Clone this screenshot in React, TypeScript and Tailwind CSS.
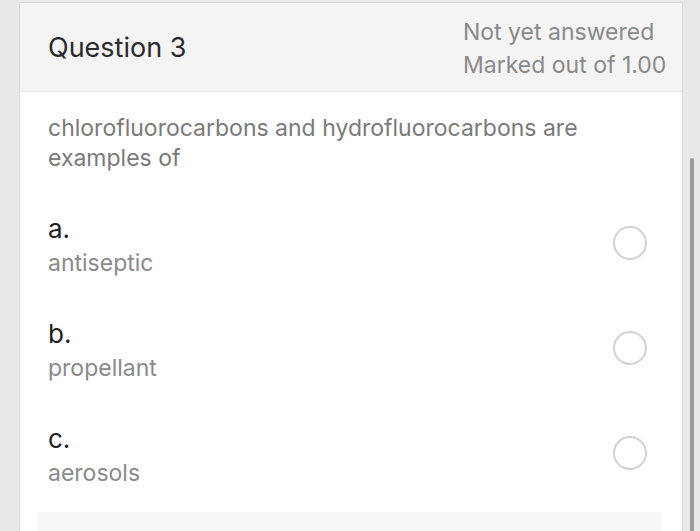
import React from "react";

const options = [
  { letter: "a.", text: "antiseptic" },
  { letter: "b.", text: "propellant" },
  { letter: "c.", text: "aerosols" },
];

function Radio() {
  return <div className="w-[34px] h-[34px] mb-[6px] rounded-full border-2 border-[#d2d2d2] bg-white shrink-0" />;
}

export default function App() {
  return (
    <div
      className="w-[700px] h-[531px] overflow-hidden bg-[#e9e9e9] flex"
      style={{ fontFamily: "Inter, Roboto, 'Liberation Sans', sans-serif" }}
    >
      <div className="ml-[19px] mt-[2px] w-[664px] shrink-0 border-x border-t border-[#d9d9d9] bg-white flex flex-col">
        {/* header */}
        <div className="h-[89px] shrink-0 bg-[#f4f4f4] border-b border-[#ececec] flex items-center pl-[28px]">
          <div className="flex-1 text-[27px] text-[#2a2a2a] pt-[2px]">Question 3</div>
          <div className="w-[219px] text-[23px] leading-[33px] text-[#8a8a8a] pt-[3px]">
            <div>Not yet answered</div>
            <div>Marked out of 1.00</div>
          </div>
        </div>

        {/* body */}
        <div className="pl-[28px] pr-[35px] pt-[21px]">
          <p className="text-[23px] leading-[30px] text-[#7a7a7a] pr-[50px]">
            chlorofluorocarbons and hydrofluorocarbons are examples of
          </p>

          <div className="mt-[39px] flex flex-col gap-[37px]">
            {options.map((o) => (
              <div key={o.letter} className="flex items-center">
                <div className="flex-1">
                  <div className="text-[26px] leading-[34px] text-[#1f1f1f]">{o.letter}</div>
                  <div className="text-[23px] leading-[34px] text-[#8a8a8a]">{o.text}</div>
                </div>
                <Radio />
              </div>
            ))}
          </div>

          <div className="mt-[22px] -ml-[11px] mr-[-15px] h-[40px] bg-[#f8f8f8]" />
        </div>
      </div>

      {/* scroll gutter */}
      <div className="flex-1 flex justify-center pt-[158px] pl-[1px]">
        <div className="w-[4px] h-full rounded-t-full bg-[#9a9a9a]" />
      </div>
    </div>
  );
}
